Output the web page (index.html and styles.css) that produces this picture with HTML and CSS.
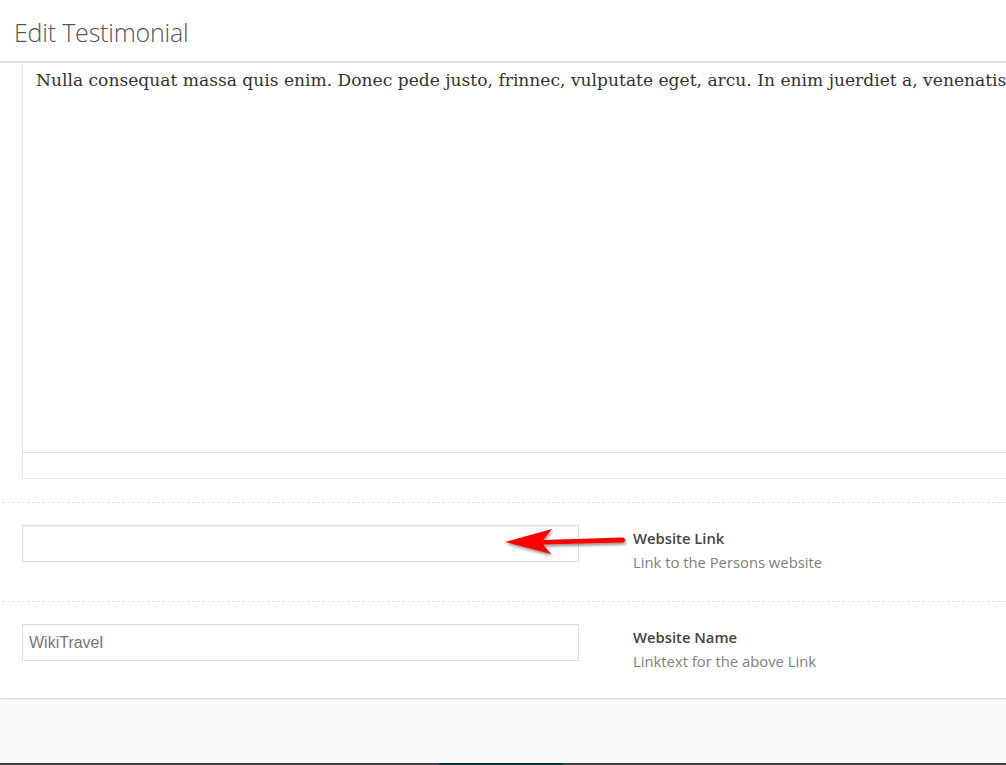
FILE: index.html
```html
<!DOCTYPE html>
<html lang="en">
<head>
    <meta charset="UTF-8">
    <meta name="viewport" content="width=device-width, initial-scale=1.0">
    <title>Edit Testimonial</title>
    <link rel="stylesheet" href="styles.css">
</head>
<body>

    <!-- Panel -->
    <div class="panel">
        <div class="panel-header">
            <h1>Edit Testimonial</h1>
        </div>

        <div class="panel-body">
            <!-- Editor -->
            <div class="editor">
                <div class="editor-content">
                    <p>Nulla consequat massa quis enim. Donec pede justo, frinnec, vulputate eget, arcu. In enim juerdiet a, venenatis vitae, justo.</p>
                </div>
                <div class="editor-status"></div>
            </div>

            <!-- Campos -->
            <div class="fields">
                <div class="field">
                    <input type="text" class="field-input" value="">
                    <div class="field-label">
                        <strong>Website Link</strong>
                        <span>Link to the Persons website</span>
                    </div>
                    <svg class="arrow" width="130" height="34" viewBox="0 0 130 34">
                        <defs>
                            <filter id="shadow" x="-20%" y="-50%" width="140%" height="200%">
                                <feDropShadow dx="1" dy="2" stdDeviation="1.6" flood-color="#000" flood-opacity="0.45"/>
                            </filter>
                        </defs>
                        <g filter="url(#shadow)" fill="#ff0000">
                            <path d="M3 17 L50 4 L41 15 L120 12.5 Q123 12.5 123 15 Q123 17.5 120 17.6 L41 19.5 L49 29 Z"/>
                        </g>
                    </svg>
                </div>

                <div class="field">
                    <input type="text" class="field-input" value="WikiTravel">
                    <div class="field-label">
                        <strong>Website Name</strong>
                        <span>Linktext for the above Link</span>
                    </div>
                </div>
            </div>
        </div>
    </div>

    <div class="bottom-bar">
        <div class="bottom-bar-active"></div>
    </div>

</body>
</html>
```

FILE: styles.css
```css
/* Estilos generales */
html, body {
    margin: 0;
    padding: 0;
}
body {
    height: 765px;
    overflow: hidden;
    display: flex;
    flex-direction: column;
    background-color: #fafafa;
    font-family: "Open Sans", Arial, sans-serif;
    color: #444;
}
.panel {
    width: 1120px;
    background-color: #fff;
    border-bottom: 1px solid #dedede;
    box-shadow: 0 1px 3px rgba(0, 0, 0, 0.06);
}
.panel-header {
    height: 61px;
    border-bottom: 2px solid #e2e2e2;
    display: flex;
    align-items: center;
    padding-left: 14px;
}
.panel-header h1 {
    margin: 2px 0 0;
    font-weight: 300;
    font-size: 25px;
    color: #555;
    letter-spacing: -0.2px;
}
.panel-body {
    padding: 0 0 0 22px;
}
.editor {
    border: 1px solid #e3e3e3;
    border-top: none;
    width: 1090px;
}
.editor-content {
    box-sizing: border-box;
    height: 389px;
    padding: 3px 13px 0;
}
.editor-content p {
    margin: 0;
    font-family: "DejaVu Serif", Georgia, serif;
    font-size: 17.1px;
    line-height: 28px;
    color: #333;
    white-space: nowrap;
}
.editor-status {
    height: 25px;
    border-top: 1px solid #e3e3e3;
}
.fields {
    margin: 23px 0 0 -20px;
}
.field {
    position: relative;
    display: flex;
    align-items: flex-start;
    padding: 22px 0 27px 20px;
    border-top: 1px dashed #e2e2e2;
}
.field + .field {
    padding-bottom: 25px;
}
.field-input {
    box-sizing: border-box;
    width: 557px;
    height: 37px;
    margin: 0;
    padding: 0 6px;
    border: 1px solid #dcdcdc;
    box-shadow: inset 0 1px 2px rgba(0, 0, 0, 0.05);
    font-family: "Liberation Sans", Arial, sans-serif;
    font-size: 16px;
    color: #777;
    outline: none;
}
.field-label {
    margin: 1px 0 0 54px;
    display: flex;
    flex-direction: column;
    font-size: 14.8px;
    line-height: 24px;
}
.field-label strong {
    font-weight: 600;
    color: #444;
}
.field-label span {
    color: #808080;
}
.arrow {
    position: absolute;
    left: 500px;
    top: 22px;
}
.bottom-bar {
    margin-top: auto;
    height: 2px;
    background-color: #444;
    display: flex;
}
.bottom-bar-active {
    margin-left: 439px;
    width: 124px;
    background-color: #0d2f3a;
}
```
